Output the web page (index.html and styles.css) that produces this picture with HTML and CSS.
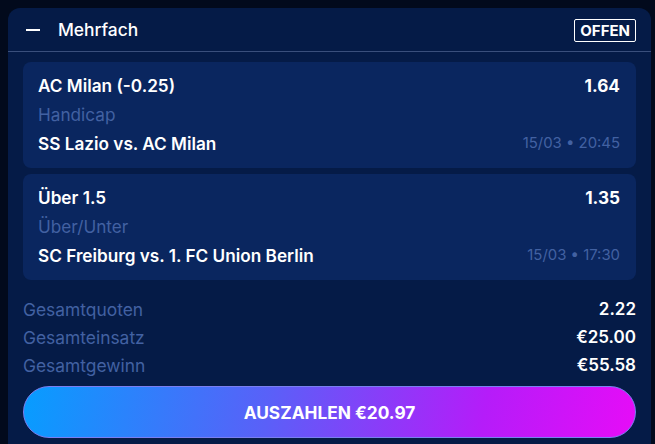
FILE: index.html
```html
<!DOCTYPE html>
<html lang="de">
<head>
<meta charset="utf-8">
<title>Mehrfach</title>
<link rel="stylesheet" href="styles.css">
</head>
<body>
<section class="slip">
  <header class="slip-head">
    <span class="collapse" aria-hidden="true"></span>
    <h2 class="slip-title">Mehrfach</h2>
    <span class="badge">OFFEN</span>
  </header>
  <div class="slip-body">
    <div class="bets">
      <article class="bet">
        <div class="bet-row">
          <span class="bet-pick">AC Milan (-0.25)</span>
          <span class="bet-odds">1.64</span>
        </div>
        <div class="bet-market">Handicap</div>
        <div class="bet-row bet-row-match">
          <span class="bet-match">SS Lazio vs. AC Milan</span>
          <span class="bet-time">15/03 • 20:45</span>
        </div>
      </article>
      <article class="bet">
        <div class="bet-row">
          <span class="bet-pick">Über 1.5</span>
          <span class="bet-odds">1.35</span>
        </div>
        <div class="bet-market">Über/Unter</div>
        <div class="bet-row bet-row-match">
          <span class="bet-match">SC Freiburg vs. 1. FC Union Berlin</span>
          <span class="bet-time">15/03 • 17:30</span>
        </div>
      </article>
    </div>
    <dl class="summary">
      <div class="sum-row"><dt>Gesamtquoten</dt><dd>2.22</dd></div>
      <div class="sum-row"><dt>Gesamteinsatz</dt><dd>€25.00</dd></div>
      <div class="sum-row"><dt>Gesamtgewinn</dt><dd>€55.58</dd></div>
    </dl>
    <button class="cashout" type="button">AUSZAHLEN €20.97</button>
  </div>
</section>
</body>
</html>
```

FILE: styles.css
```css
* { box-sizing: border-box; }

html, body {
  margin: 0;
  height: 100%;
}

body {
  background: #020a1c;
  padding: 8px 4px 0 8px;
  font-family: Inter, "Noto Sans", sans-serif;
  color: #ffffff;
  overflow: hidden;
}

.slip {
  background: #051b47;
  border-radius: 12px 12px 0 0;
  min-height: 460px;
}

.slip-head {
  display: flex;
  align-items: center;
  height: 44px;
  padding: 0 15px 0 18px;
  border-bottom: 1px solid #3a4f7c;
}

.collapse {
  width: 14px;
  height: 2px;
  background: #ffffff;
  margin-right: 18px;
}

.slip-title {
  margin: 0;
  font-size: 17.4px;
  font-weight: 500;
  flex: 1;
}

.badge {
  border: 1px solid #ffffff;
  border-radius: 2px;
  font-size: 15px;
  font-weight: 700;
  padding: 0 5px;
  height: 23px;
  line-height: 21px;
  margin-top: 1px;
}

.slip-body {
  padding: 10px 15px 0 15px;
}

.bets {
  display: flex;
  flex-direction: column;
  gap: 6px;
}

.bet {
  background: #0a265f;
  border-radius: 8px;
  padding: 12px 16px 14px 15px;
}

.bet-row {
  display: flex;
  justify-content: space-between;
  align-items: center;
  height: 22px;
}

.bet-pick, .bet-odds, .bet-match {
  font-size: 17.2px;
  font-weight: 600;
}

.bet-odds {
  font-weight: 700;
}

.bet-market {
  margin-top: 8px;
  height: 22px;
  line-height: 22px;
  font-size: 17.2px;
  color: #4261a2;
}

.bet-row-match {
  margin-top: 6px;
}

.bet-time {
  font-size: 14.9px;
  color: #4261a2;
}

.summary {
  margin: 15px 0 0 0;
  padding: 0;
}

.sum-row {
  display: flex;
  justify-content: space-between;
  align-items: center;
  height: 28px;
}

.sum-row dt {
  font-size: 17.4px;
  color: #4261a2;
}

.sum-row dd {
  margin: 0;
  font-size: 17px;
  font-weight: 600;
}

.cashout {
  display: block;
  width: 100%;
  height: 52px;
  margin-top: 7px;
  border: 1px solid #7a7ff0;
  border-radius: 26px;
  background: linear-gradient(100deg, #079dff 0%, #5a60f8 40%, #b51cf9 75%, #e60cf7 100%);
  color: #ffffff;
  font-family: Inter, "Noto Sans", sans-serif;
  font-size: 17.3px;
  font-weight: 700;
  cursor: pointer;
}
```
